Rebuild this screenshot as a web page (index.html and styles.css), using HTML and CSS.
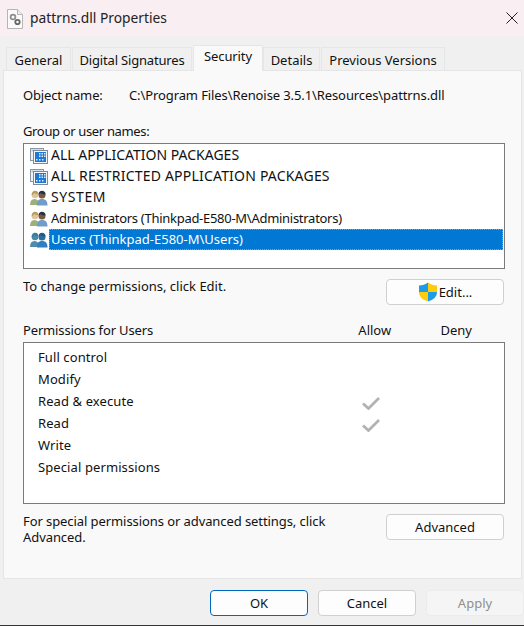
FILE: index.html
```html
<!DOCTYPE html>
<html lang="en">
<head>
<meta charset="utf-8">
<title>pattrns.dll Properties</title>
<link rel="stylesheet" href="styles.css">
</head>
<body>
<svg class="defs" width="0" height="0" aria-hidden="true">
  <defs>
    <symbol id="i-group" viewBox="0 0 18 16">
      <rect x="0.5" y="0.5" width="13" height="12" fill="#eef2f6" stroke="#8b97a3"/>
      <rect x="1.5" y="1.5" width="11" height="2" fill="#b9c6d2"/>
      <rect x="3.5" y="2.5" width="14" height="13" fill="#f4f7fa" stroke="#7d8a97"/>
      <rect x="5" y="4" width="11" height="10" fill="#1f78d1"/>
      <path d="M9 5h1.500v1.500H9zM11.500 5H13v1.500h-1.500zM14 5h1.500v1.500H14zM9 7.500h1.500V9H9zM11.500 7.500H13V9h-1.500zM14 7.500h1.500V9H14zM6 11h1.500v1.500H6zM9 11h1.500v1.500H9zM12 11h1.500v1.500H12z" fill="#dcecff"/>
    </symbol>
    <symbol id="i-users" viewBox="0 0 18 16">
      <path d="M0 15c0-4 1.500-6 4.500-6s4.500 2 4.500 6z" fill="#9db07c"/>
      <circle cx="5" cy="5" r="3.300" fill="#e2c39a"/>
      <path d="M1.800 5.500C1.500 2 3.500.8 5.200.8 7.500.8 8.500 2.500 8 4 6.500 4 4.500 3.500 3.800 3c-.2 1-.8 2-2 2.500z" fill="#b1a05f"/>
      <path d="M7 15.500c0-4.500 1.500-6.500 5-6.500s5.500 2 5.500 6.500z" fill="#6f9cc8"/>
      <circle cx="12" cy="5" r="3.500" fill="#7c5a40"/>
      <path d="M8.500 4.500C8.500 2 10 .8 12 .8s3.500 1.200 3.500 3.700c-2 0-4-.5-5-1.500-.3.700-1 1.300-2 1.500z" fill="#27343f"/>
    </symbol>
    <symbol id="i-users-blue" viewBox="0 0 18 16">
      <path d="M0 15c0-4 1.500-6 4.500-6s4.500 2 4.500 6z" fill="#4f8cab"/>
      <circle cx="5" cy="5" r="3.300" fill="#4a8aa8"/>
      <path d="M1.800 5.500C1.500 2 3.500.8 5.200.8 7.500.8 8.500 2.500 8 4 6.500 4 4.500 3.500 3.800 3c-.2 1-.8 2-2 2.500z" fill="#3c7d99"/>
      <path d="M7 15.500c0-4.500 1.500-6.500 5-6.500s5.500 2 5.500 6.500z" fill="#2f7fc1"/>
      <circle cx="12" cy="5" r="3.500" fill="#2c6f9f"/>
      <path d="M8.500 4.500C8.500 2 10 .8 12 .8s3.500 1.200 3.500 3.700c-2 0-4-.5-5-1.500-.3.700-1 1.300-2 1.500z" fill="#1e5c86"/>
    </symbol>
    <symbol id="i-check" viewBox="0 0 18 14">
      <path d="M1 7.500 6.500 12.500 17 2" fill="none" stroke="#b2b2b2" stroke-width="2.800"/>
    </symbol>
  </defs>
</svg>
<div class="window">
  <header class="titlebar">
    <svg class="file-icon" viewBox="0 0 16 20" width="16" height="20" aria-hidden="true">
      <path d="M.5.500h10l5 5v14H.500z" fill="#fbfbfb" stroke="#b5b5b5"/>
      <path d="M10.500.500v5h5" fill="#eee" stroke="#b5b5b5"/>
      <circle cx="6" cy="8" r="2.400" fill="none" stroke="#8f8f8f" stroke-width="1.800"/>
      <circle cx="10.500" cy="13" r="2.200" fill="none" stroke="#666" stroke-width="1.800"/>
    </svg>
    <span class="title">pattrns.dll Properties</span>
    <svg class="close" viewBox="0 0 12 12" width="12" height="12" aria-hidden="true">
      <path d="M.5.500l11 11M11.500.500l-11 11" stroke="#222" stroke-width="1" fill="none"/>
    </svg>
  </header>

  <nav class="tabs">
    <span class="tab tab-general">General</span>
    <span class="tab tab-signatures">Digital Signatures</span>
    <span class="tab tab-security">Security</span>
    <span class="tab tab-details">Details</span>
    <span class="tab tab-versions">Previous Versions</span>
  </nav>

  <main class="panel">
    <div class="object-row">
      <span class="object-label">Object name:</span>
      <span class="object-path">C:\Program Files\Renoise 3.5.1\Resources\pattrns.dll</span>
    </div>

    <div class="section-label">Group or user names:</div>
    <ul class="names">
      <li class="name"><svg class="name-icon"><use href="#i-group"/></svg><span class="name-text caps">ALL APPLICATION PACKAGES</span></li>
      <li class="name"><svg class="name-icon"><use href="#i-group"/></svg><span class="name-text caps caps-long">ALL RESTRICTED APPLICATION PACKAGES</span></li>
      <li class="name"><svg class="name-icon"><use href="#i-users"/></svg><span class="name-text caps caps-short">SYSTEM</span></li>
      <li class="name"><svg class="name-icon"><use href="#i-users"/></svg><span class="name-text name-tight">Administrators (Thinkpad-E580-M\Administrators)</span></li>
      <li class="name is-selected"><svg class="name-icon"><use href="#i-users-blue"/></svg><span class="name-text">Users (Thinkpad-E580-M\Users)</span></li>
    </ul>

    <div class="action-row action-edit">
      <span class="action-text">To change permissions, click Edit.</span>
      <button class="btn btn-side" type="button">
        <svg class="shield" viewBox="0 0 20 20" width="20" height="20" aria-hidden="true">
          <path d="M10 .500C7.500 2.500 4.500 3.500 1 3.500V10h9z" fill="#1b9ce5"/>
          <path d="M10 .500c2.500 2 5.500 3 9 3V10h-9z" fill="#ffcc0d"/>
          <path d="M1 10c0 4.500 3.500 8 9 9.500V10z" fill="#ffcc0d"/>
          <path d="M19 10c0 4.500-3.500 8-9 9.500V10z" fill="#1b9ce5"/>
        </svg>Edit...</button>
    </div>

    <div class="perm-head">
      <span class="perm-title">Permissions for Users</span>
      <span class="perm-col">Allow</span>
      <span class="perm-col">Deny</span>
    </div>
    <ul class="perms">
      <li class="perm"><span class="perm-name">Full control</span></li>
      <li class="perm"><span class="perm-name">Modify</span></li>
      <li class="perm"><span class="perm-name">Read &amp; execute</span><svg class="check"><use href="#i-check"/></svg></li>
      <li class="perm"><span class="perm-name">Read</span><svg class="check"><use href="#i-check"/></svg></li>
      <li class="perm"><span class="perm-name">Write</span></li>
      <li class="perm"><span class="perm-name">Special permissions</span></li>
    </ul>

    <div class="action-row action-advanced">
      <p class="hint">For special permissions or advanced settings, click Advanced.</p>
      <button class="btn btn-side" type="button">Advanced</button>
    </div>
  </main>

  <footer class="footer">
    <button class="btn btn-foot btn-primary" type="button">OK</button>
    <button class="btn btn-foot" type="button">Cancel</button>
    <button class="btn btn-foot btn-disabled" type="button">Apply</button>
  </footer>
</div>
</body>
</html>
```

FILE: styles.css
```css
* { box-sizing: border-box; }
html, body { margin: 0; padding: 0; }
body {
  font-family: "Noto Sans", "Liberation Sans", sans-serif;
  font-size: 13px;
  line-height: 16px;
  color: #111;
  background: #f0f0f0;
  overflow: hidden;
}
.defs { position: absolute; }
.window {
  width: 524px;
  height: 626px;
  display: flex;
  flex-direction: column;
  border-bottom: 1px solid #333;
}

.titlebar {
  height: 36px;
  flex: none;
  display: flex;
  align-items: center;
  background: #f9eef1;
  padding: 0 6px 0 7px;
}
.file-icon { flex: none; margin-top: 1px; }
.title { margin-left: 7px; font-size: 13.8px; flex: 1; color: #222; }
.close { flex: none; }

.tabs {
  height: 34px;
  flex: none;
  display: flex;
  align-items: flex-end;
  padding-left: 6px;
  position: relative;
  z-index: 1;
}
.tab {
  height: 23px;
  display: flex;
  align-items: center;
  justify-content: center;
  padding-top: 1px;
  border: 1px solid #e6e6e6;
  border-bottom: 0;
  margin-right: 1px;
  background: #f0f0f0;
}
.tab-general { width: 65px; }
.tab-signatures { width: 120px; letter-spacing: -0.17px; }
.tab-security {
  width: 70px;
  height: 26px;
  margin-bottom: -1px;
  padding: 0 0 5px;
  background: #f9f9f9;
  margin-right: 0;
  letter-spacing: -0.1px;
}
.tab-details { width: 57px; }
.tab-versions { width: 124px; }

.panel {
  height: 509px;
  flex: none;
  margin: 0 2px 0 3px;
  padding: 16px 17px 0 19px;
  background: #f9f9f9;
  border: 1px solid #e5e5e5;
  display: flex;
  flex-direction: column;
}

.object-row { display: flex; height: 16px; }
.object-label { width: 106px; flex: none; letter-spacing: -0.15px; }
.object-path { letter-spacing: -0.1px; }

.section-label { margin-top: 20px; height: 16px; letter-spacing: -0.35px; }

.names, .perms {
  list-style: none;
  margin: 0;
  background: #fff;
  border: 1px solid #7a7a7a;
  width: 482px;
}
.names { margin-top: 4px; height: 126px; padding: 1px 1px 0 6px; }
.name { height: 21px; display: flex; align-items: center; }
.name-icon { width: 18px; height: 16px; flex: none; margin-right: 1px; }
.name-text { flex: none; padding: 0 1px; height: 21px; line-height: 19px; border: 1px solid transparent; }
.caps { font-size: 14px; line-height: 17px; }
.caps-long { letter-spacing: 0.2px; }
.caps-short { letter-spacing: 0.6px; }
.name-tight { letter-spacing: -0.28px; }
.is-selected .name-text {
  flex: 1;
  background: #0078d4;
  color: #fff;
  border: 1px dotted #f08a24;
}

.action-row { display: flex; justify-content: space-between; width: 481px; }
.action-edit { margin-top: 10px; height: 26px; }
.action-advanced { margin-top: 10px; height: 26px; }
.action-text { margin-top: -1px; }
.hint { margin: -1px 0 0; width: 330px; letter-spacing: -0.08px; }

.btn {
  font: inherit;
  color: inherit;
  background: #fdfdfd;
  border: 1px solid #d0d0d0;
  border-radius: 4px;
  padding: 0;
  display: flex;
  align-items: center;
  justify-content: center;
}
.btn-side { width: 118px; height: 26px; }
.shield { margin-right: 1px; }

.perm-head { display: flex; margin-top: 17px; height: 16px; }
.perm-title { width: 311px; flex: none; letter-spacing: -0.15px; }
.perm-col { width: 81.500px; text-align: center; flex: none; }

.perms { margin-top: 4px; height: 162px; padding: 3px 0 0 14px; }
.perm { height: 22px; display: flex; align-items: center; position: relative; }
.perm-name { width: 324px; flex: none; letter-spacing: 0.1px; }
.check { width: 18px; height: 14px; flex: none; margin-top: 4px; }

.footer {
  flex: 1;
  display: flex;
  gap: 10px;
  padding: 11px 0 0 210px;
  background: #f0f0f0;
}
.btn-foot { width: 98px; height: 26px; flex: none; }
.btn-foot.btn-primary { border-color: #0067c0; }
.btn-disabled { background: #f5f5f5; border-color: #ececec; color: #8f8f8f; }
```
